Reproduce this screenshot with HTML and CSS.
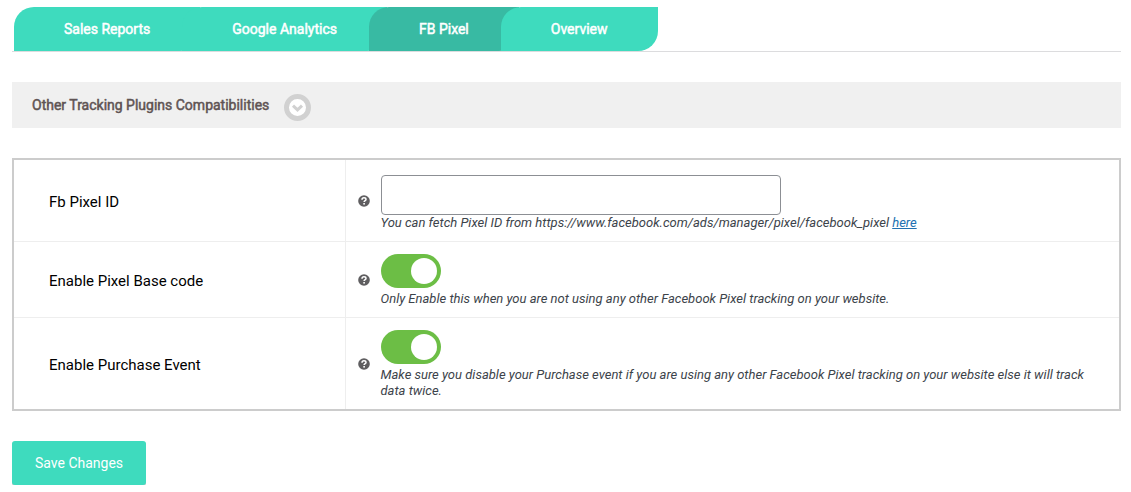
FILE: index.html
```html
<!DOCTYPE html>
<html lang="en">
<head>
<meta charset="utf-8">
<title>FB Pixel settings</title>
<link rel="stylesheet" href="styles.css">
</head>
<body>
<svg class="sprite" aria-hidden="true">
  <symbol id="help" viewBox="0 0 12 12">
    <circle cx="6" cy="6" r="5.8" fill="#5f5e60"/>
    <path d="M4 4.7C4 3.4 4.8 2.7 6 2.7s2 .7 2 1.7C8 5.700 6.100 5.600 6.100 7.100" fill="none" stroke="#fff" stroke-width="1.5"/>
    <rect x="5.300" y="8" width="1.600" height="1.600" fill="#fff"/>
  </symbol>
</svg>
<main class="page">
  <nav class="tabs">
    <a class="tab" href="#sales">Sales Reports</a>
    <a class="tab" href="#analytics">Google Analytics</a>
    <a class="tab tab-active" href="#pixel" aria-current="page">FB Pixel</a>
    <a class="tab" href="#overview">Overview</a>
  </nav>

  <section class="notice">
    <h2 class="notice-title">Other Tracking Plugins Compatibilities</h2>
    <button class="expand" type="button" aria-label="Expand">
      <svg class="expand-icon" viewBox="0 0 27 27">
        <circle cx="13.500" cy="13.500" r="11" fill="#fff" stroke="#d1d1d1" stroke-width="5"/>
        <path d="M9 11.700l4.500 4.200L18 11.700" fill="none" stroke="#d1d1d1" stroke-width="3"/>
      </svg>
    </button>
  </section>

  <form class="form">
    <div class="settings">
      <div class="row">
        <label class="label" for="pixel-id">Fb Pixel ID</label>
        <div class="cell">
          <svg class="help"><use href="#help"/></svg>
          <div class="field">
            <input class="text-input" id="pixel-id" type="text">
            <p class="description">You can fetch Pixel ID from https://www.facebook.com/ads/manager/pixel/facebook_pixel <a class="link" href="#here">here</a></p>
          </div>
        </div>
      </div>
      <div class="row">
        <label class="label" for="base-code">Enable Pixel Base code</label>
        <div class="cell">
          <svg class="help"><use href="#help"/></svg>
          <div class="field">
            <input class="toggle" id="base-code" type="checkbox" checked>
            <p class="description">Only Enable this when you are not using any other Facebook Pixel tracking on your website.</p>
          </div>
        </div>
      </div>
      <div class="row">
        <label class="label" for="purchase">Enable Purchase Event</label>
        <div class="cell">
          <svg class="help"><use href="#help"/></svg>
          <div class="field">
            <input class="toggle" id="purchase" type="checkbox" checked>
            <p class="description">Make sure you disable your Purchase event if you are using any other Facebook Pixel tracking on your website else it will track data twice.</p>
          </div>
        </div>
      </div>
    </div>
    <button class="save" type="button">Save Changes</button>
  </form>
</main>
</body>
</html>
```
FILE: styles.css
```css
* {
  box-sizing: border-box;
}

body {
  margin: 0;
  background: #fff;
  color: #3c434a;
  font-family: Roboto, sans-serif;
  font-size: 14px;
}

.sprite {
  position: absolute;
  width: 0;
  height: 0;
}

.page {
  padding: 7px 10px 0 12px;
}

.tabs {
  display: flex;
  padding-left: 2px;
  border-bottom: 1px solid #dcdcde;
}

.tab {
  padding: 0 50px;
  border-radius: 20px 0;
  background: #3edbbe;
  color: #fff;
  line-height: 44px;
  text-decoration: none;
  -webkit-text-stroke: 0.5px currentColor;
}

.tab + .tab {
  margin-left: -18px;
}

.tab-active {
  background: #38baa3;
}

.notice {
  display: flex;
  align-items: flex-start;
  gap: 15px;
  min-height: 46px;
  margin-top: 30px;
  padding: 12px 20px 7px;
  background: #f0f0f0;
}

.notice-title {
  margin: 0;
  color: #5f5454;
  font-size: 14px;
  font-weight: 400;
  line-height: 22px;
  -webkit-text-stroke: 0.5px currentColor;
}

.expand {
  padding: 0;
  border: 0;
  background: none;
}

.expand-icon {
  display: block;
  width: 27px;
  height: 27px;
}

.form {
  margin-top: 30px;
}

.settings {
  border: 2px solid #ccc;
}

.row {
  display: grid;
  grid-template-columns: calc(30% - 1px) 1fr;
}

.row + .row {
  border-top: 1px solid #eee;
}

.label {
  display: flex;
  align-items: center;
  padding: 2px 35px 0;
  color: #000;
  font-size: 15px;
}

.cell {
  display: flex;
  align-items: center;
  gap: 11px;
  padding: 12px 12px 10px;
  border-left: 1px solid #eee;
}

.help {
  flex: none;
  width: 12px;
  height: 12px;
  margin-bottom: 2px;
}

.field {
  flex: 1;
}

.text-input {
  display: block;
  width: 400px;
  max-width: 100%;
  height: 40px;
  margin-top: 3px;
  padding: 0 8px;
  border: 1px solid #8c8f94;
  border-radius: 4px;
  background: #fff;
  font: inherit;
}

.description {
  margin: 0;
  font-size: 13px;
  font-style: oblique;
  line-height: 16px;
}

.link {
  color: #2271b1;
}

.toggle {
  appearance: none;
  display: flex;
  align-items: center;
  width: 60px;
  height: 34px;
  margin: 0 0 3px;
  padding: 0 4px;
  border-radius: 17px;
  background: #ccc;
}

.toggle::before {
  content: "";
  width: 26px;
  height: 26px;
  border-radius: 50%;
  background: #fff;
}

.toggle:checked {
  justify-content: flex-end;
  background: #6cbe45;
}

.save {
  display: block;
  margin-top: 30px;
  padding: 0 23px;
  border: 0;
  border-radius: 3px;
  background: #3edbbe;
  box-shadow: 0 1px 0 #ccc;
  color: #fff;
  font: inherit;
  line-height: 44px;
}
```
